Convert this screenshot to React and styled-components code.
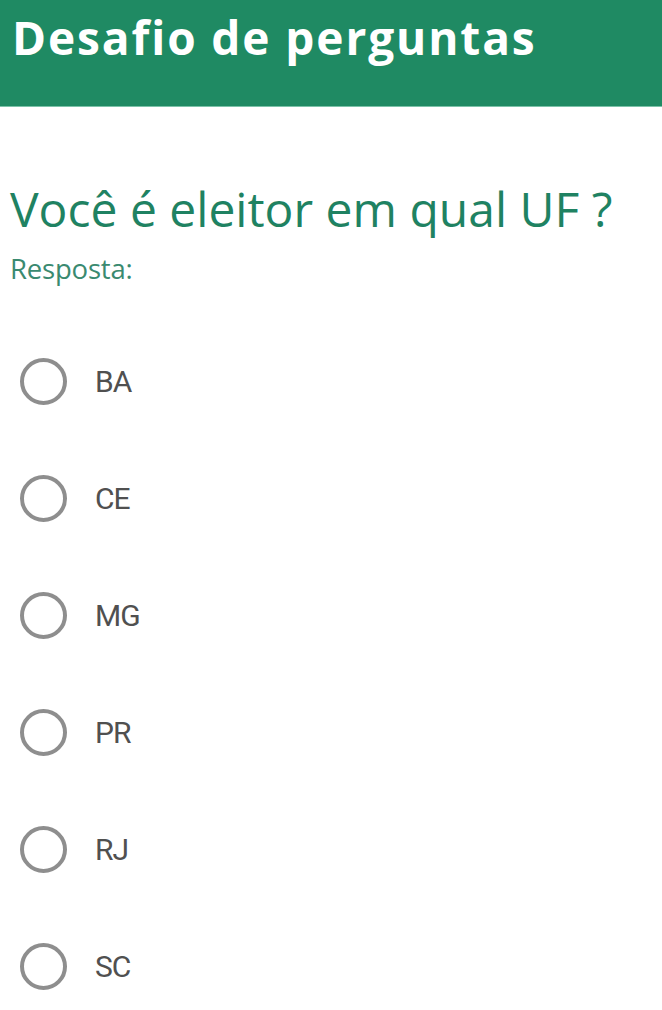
import React from "react";
import styled, { createGlobalStyle } from "styled-components";

const GlobalStyle = createGlobalStyle`
  html, body {
    margin: 0;
    padding: 0;
    background: #ffffff;
  }
`;

const Page = styled.div`
  width: 662px;
  min-height: 1010px;
  background: #ffffff;
`;

const Header = styled.header`
  height: 107px;
  background: #1f8a63;
  border-bottom: 1px solid #7cc2a9;
  box-sizing: border-box;
  padding: 9px 0 0 12px;
`;

const Title = styled.h1`
  margin: 0;
  font-family: "Open Sans", sans-serif;
  font-weight: 700;
  font-size: 46px;
  line-height: 56px;
  color: #ffffff;
  letter-spacing: 1.9px;
`;

const Content = styled.main`
  padding: 72px 0 0 10px;
`;

const Question = styled.h2`
  margin: 0;
  font-family: "Open Sans", sans-serif;
  font-weight: 400;
  font-size: 48px;
  line-height: 60px;
  color: #1f8262;
  letter-spacing: 0;
`;

const Label = styled.div`
  margin-top: 13px;
  font-family: "Open Sans", sans-serif;
  font-size: 27.5px;
  line-height: 34px;
  color: #3a8a70;
  letter-spacing: -0.2px;
`;

const Options = styled.div`
  display: flex;
  flex-direction: column;
  gap: 69px;
  margin-top: 71px;
  padding-left: 10px;
`;

const Option = styled.label`
  display: flex;
  align-items: center;
  gap: 28px;
  height: 48px;
  cursor: pointer;
`;

const Radio = styled.span`
  width: 47px;
  height: 47px;
  box-sizing: border-box;
  border: 4px solid #8e8e8e;
  border-radius: 50%;
`;

const OptionText = styled.span`
  font-family: Roboto, sans-serif;
  font-size: 30px;
  color: #505050;
  letter-spacing: -1px;
`;

const ufs = ["BA", "CE", "MG", "PR", "RJ", "SC"];

export default function App() {
  return (
    <Page>
      <GlobalStyle />
      <Header>
        <Title>Desafio de perguntas</Title>
      </Header>
      <Content>
        <Question>Você é eleitor em qual UF ?</Question>
        <Label>Resposta:</Label>
        <Options>
          {ufs.map((uf) => (
            <Option key={uf}>
              <Radio />
              <OptionText>{uf}</OptionText>
            </Option>
          ))}
        </Options>
      </Content>
    </Page>
  );
}
